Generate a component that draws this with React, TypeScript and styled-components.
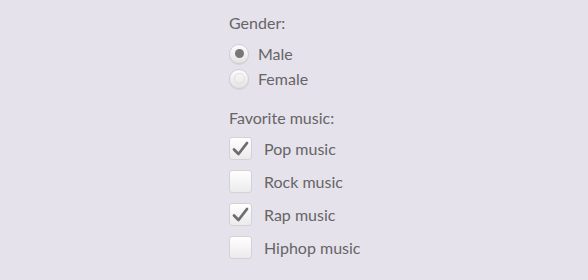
import React from "react";
import styled, { createGlobalStyle } from "styled-components";

const Global = createGlobalStyle`
  html, body { margin: 0; padding: 0; background: #e5e2ec; }
  body { font-family: Lato, "Open Sans", sans-serif; }
`;

const Page = styled.div`
  width: 588px;
  height: 280px;
  box-sizing: border-box;
  padding: 13px 0 0 229px;
  display: flex;
  flex-direction: column;
  color: #656565;
  font-size: 16px;
`;

const GroupLabel = styled.div<{ $gap: number }>`
  line-height: 20px;
  height: 20px;
  margin-bottom: ${(p) => p.$gap}px;
`;

const RadioRow = styled.label`
  display: flex;
  align-items: center;
  height: 25px;
  gap: 9px;
`;

const RadioCircle = styled.span<{ $checked?: boolean }>`
  width: 20px;
  height: 20px;
  box-sizing: border-box;
  border-radius: 50%;
  border: 1px solid #d0ced4;
  background: linear-gradient(#fcfcfc, #e4e4e4);
  box-shadow: 0 1px 1px rgba(0, 0, 0, 0.08);
  display: flex;
  align-items: center;
  justify-content: center;
  &::after {
    content: "";
    width: ${(p) => (p.$checked ? 9 : 11)}px;
    height: ${(p) => (p.$checked ? 9 : 11)}px;
    border-radius: 50%;
    box-sizing: border-box;
    background: ${(p) => (p.$checked ? "#777" : "transparent")};
    border: ${(p) => (p.$checked ? "none" : "1px solid #e0e0e0")};
  }
`;

const Spacer = styled.div<{ $h: number }>`
  height: ${(p) => p.$h}px;
`;

const CheckRow = styled.label`
  display: flex;
  align-items: center;
  height: 33px;
  gap: 12px;
`;

const CheckBox = styled.span`
  width: 23px;
  height: 23px;
  box-sizing: border-box;
  border-radius: 3px;
  border: 1px solid #d4d2d8;
  background: linear-gradient(#ffffff, #ebebeb);
  display: flex;
  align-items: center;
  justify-content: center;
`;

const Check = () => (
  <svg width="17" height="15" viewBox="0 0 17 15">
    <path d="M2 8.5 L6.5 13 L15 2" fill="none" stroke="#6e6e6e" strokeWidth="2.8" strokeLinecap="round" strokeLinejoin="round" />
  </svg>
);

const music = [
  { name: "Pop music", checked: true },
  { name: "Rock music", checked: false },
  { name: "Rap music", checked: true },
  { name: "Hiphop music", checked: false },
];

export default function App() {
  return (
    <>
      <Global />
      <Page>
        <GroupLabel $gap={8}>Gender:</GroupLabel>
        <RadioRow>
          <RadioCircle $checked />
          Male
        </RadioRow>
        <RadioRow>
          <RadioCircle />
          Female
        </RadioRow>
        <Spacer $h={17} />
        <GroupLabel $gap={4}>Favorite music:</GroupLabel>
        {music.map((m) => (
          <CheckRow key={m.name}>
            <CheckBox>{m.checked && <Check />}</CheckBox>
            {m.name}
          </CheckRow>
        ))}
      </Page>
    </>
  );
}
